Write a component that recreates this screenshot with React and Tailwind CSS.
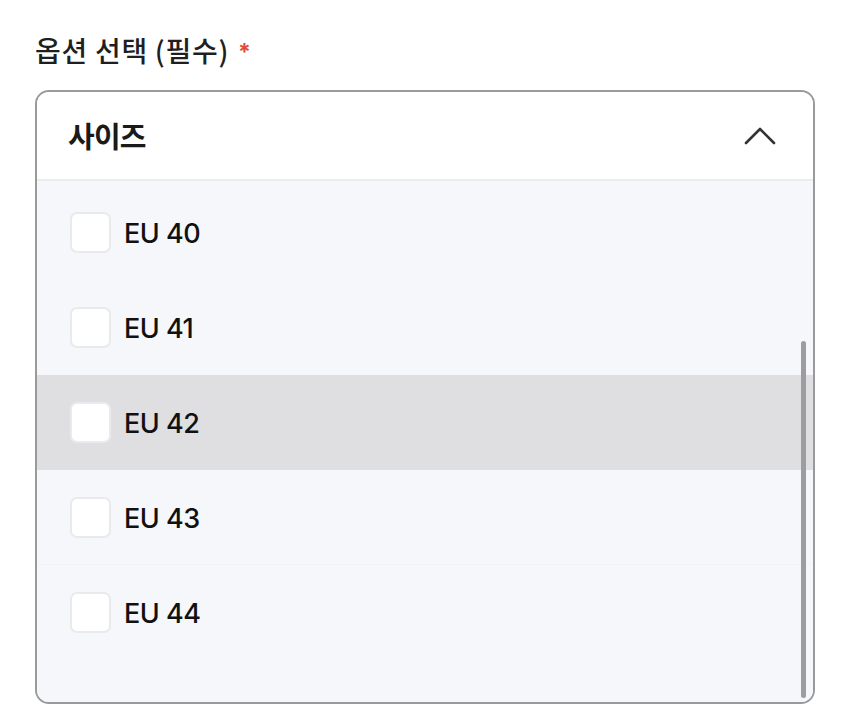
import React from "react";

const sizes = ["EU 40", "EU 41", "EU 42", "EU 43", "EU 44"];

export default function App() {
  return (
    <div
      className="w-[850px] h-[718px] bg-white overflow-hidden"
      style={{ fontFamily: '"Inter", "Noto Sans CJK KR", sans-serif' }}
    >
      <div className="pl-[35px] pr-[35px] pt-[30px]">
        <div className="flex items-center h-[40px] text-[#1f1f1f]">
          <span
            className="text-[28px] font-medium tracking-[0.7px]"
            style={{ fontFamily: '"Noto Sans CJK KR", sans-serif' }}
          >
            옵션 선택 (필수)
          </span>
          <span className="ml-[9px] text-[23px] text-[#e4493c] font-bold leading-none mt-[4px]">*</span>
        </div>
        <div className="mt-[20px] w-[780px] h-[614px] border-2 border-[#9a9a9a] rounded-[14px] overflow-hidden flex flex-col relative">
          <div className="h-[89px] shrink-0 bg-white flex items-center justify-between pl-[31px] pr-[37px] border-b-2 border-[#ececee]">
            <span
              className="text-[29px] font-bold text-[#1a1a1a] tracking-[-0.8px]"
              style={{ fontFamily: '"Noto Sans CJK KR", sans-serif' }}
            >
              사이즈
            </span>
            <svg width="32" height="19" viewBox="0 0 32 19" fill="none">
              <path d="M2 17 L16 3 L30 17" stroke="#333" strokeWidth="2.6" strokeLinecap="round" strokeLinejoin="round" />
            </svg>
          </div>
          <div className="flex-1 bg-[#f6f7fa] pt-[4px] flex flex-col">
            {sizes.map((s, i) => (
              <div
                key={s}
                className={
                  "h-[95px] shrink-0 flex items-center pl-[33px] " +
                  (s === "EU 42" ? "bg-[#dfdfe2] " : "") +
                  (i === 3 ? "border-b border-[#f2f3f6]" : "")
                }
              >
                <div className="w-[41px] h-[41px] rounded-[7px] border-2 border-[#e9eaed] bg-white" />
                <span className="ml-[13px] mt-[4px] text-[27px] font-medium text-[#111] tracking-[-0.5px]">{s}</span>
              </div>
            ))}
          </div>
          <div className="absolute right-[7px] top-[249px] w-[5px] h-[357px] rounded-full bg-[#9d9d9f]" />
        </div>
      </div>
    </div>
  );
}
